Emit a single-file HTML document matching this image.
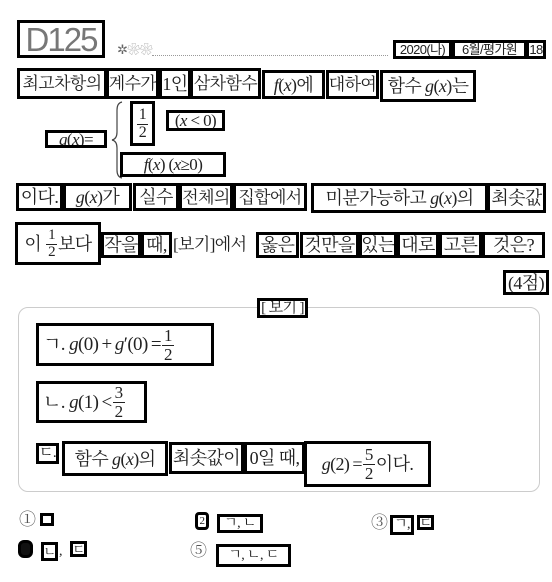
<!DOCTYPE html>
<html><head><meta charset="utf-8"><style>
body{margin:0;width:552px;height:582px;background:#fff;position:relative;overflow:hidden;font-family:"Liberation Serif","Noto Serif CJK KR","Noto Serif CJK SC",serif;color:#222}
.b{position:absolute;border:3px solid #000;box-sizing:border-box;display:flex;align-items:center;justify-content:center;white-space:nowrap;font-size:18px;letter-spacing:-0.6px;line-height:1;overflow:hidden}
.t{position:absolute;white-space:nowrap;font-size:18px;letter-spacing:-0.6px;line-height:1}
i{font-style:italic}
.fr{display:inline-flex;flex-direction:column;align-items:center;font-size:15px;line-height:1;vertical-align:middle;margin:0 1px}
.fr span:first-child{border-bottom:1px solid #222;padding:0 2px 1px}
.s{font-family:"Liberation Sans","Noto Sans CJK KR",sans-serif}
</style></head><body>
<div class="b s" style="left:17px;top:20px;width:88px;height:38px;font-size:33px;color:#777;letter-spacing:-2px">D125</div>
<div class="t" style="left:117px;top:43px;font-size:13px;color:#666">✲<span style="color:#bbb">❀❀</span></div>
<div style="position:absolute;left:152px;top:55px;width:236px;border-top:1px dotted #999"></div>
<div class="b s" style="left:393px;top:40px;width:59px;height:19px;font-size:13px">2020(나)</div>
<div class="b s" style="left:452px;top:40px;width:75px;height:19px;font-size:13px">6월/평가원</div>
<div class="b s" style="left:526px;top:40px;width:20px;height:19px;font-size:13px">18</div>

<div class="b" style="left:17px;top:68px;width:90px;height:31px;font-size:17px">최고차항의</div>
<div class="b" style="left:106px;top:68px;width:53px;height:31px;font-size:17px">계수가</div>
<div class="b" style="left:159px;top:68px;width:32px;height:31px">1인</div>
<div class="b" style="left:190px;top:68px;width:71px;height:31px;font-size:17px">삼차함수</div>
<div class="b" style="left:262px;top:70px;width:63px;height:29px"><i>f</i>(<i>x</i>)에</div>
<div class="b" style="left:326px;top:70px;width:53px;height:29px;font-size:17px">대하여</div>
<div class="b" style="left:380px;top:70px;width:96px;height:32px">함수&nbsp;<i>g</i>(<i>x</i>)는</div>

<div class="b" style="left:45px;top:130px;width:62px;height:18px;font-size:17px"><i>g</i>(<i>x</i>)=</div>
<svg style="position:absolute;left:110px;top:100px" width="16" height="80"><path d="M12 2 Q7 3 7 10 L7 32 Q7 39 2 40 Q7 41 7 48 L7 70 Q7 77 12 78" fill="none" stroke="#444" stroke-width="1.2"/></svg>
<div class="b" style="left:130px;top:101px;width:25px;height:45px"><span class="fr" style="font-size:16px"><span>1</span><span>2</span></span></div>
<div class="b" style="left:166px;top:110px;width:59px;height:21px;font-size:17px">(<i>x</i>&nbsp;&lt;&nbsp;0)</div>
<div class="b" style="left:120px;top:152px;width:106px;height:25px;font-size:17px"><i>f</i>(<i>x</i>)&nbsp;(<i>x</i>≥0)</div>

<div class="b" style="left:16px;top:183px;width:47px;height:28px">이다.</div>
<div class="b" style="left:63px;top:183px;width:69px;height:28px"><i>g</i>(<i>x</i>)가</div>
<div class="b" style="left:133px;top:183px;width:46px;height:28px">실수</div>
<div class="b" style="left:179px;top:183px;width:54px;height:28px;font-size:17px">전체의</div>
<div class="b" style="left:233px;top:183px;width:74px;height:28px;font-size:17px">집합에서</div>
<div class="b" style="left:311px;top:183px;width:177px;height:30px">미분가능하고&nbsp;<i>g</i>(<i>x</i>)의</div>
<div class="b" style="left:487px;top:183px;width:59px;height:30px">최솟값</div>

<div class="b" style="left:15px;top:222px;width:86px;height:43px">이&nbsp;<span class="fr"><span>1</span><span>2</span></span>보다</div>
<div class="b" style="left:101px;top:232px;width:40px;height:26px">작을</div>
<div class="b" style="left:141px;top:232px;width:31px;height:26px">때,</div>
<div class="t" style="left:173px;top:236px;font-size:17px">[보기]에서</div>
<div class="b" style="left:256px;top:232px;width:43px;height:26px">옳은</div>
<div class="b" style="left:300px;top:232px;width:59px;height:26px">것만을</div>
<div class="b" style="left:359px;top:232px;width:38px;height:26px">있는</div>
<div class="b" style="left:397px;top:232px;width:42px;height:26px">대로</div>
<div class="b" style="left:439px;top:232px;width:43px;height:26px">고른</div>
<div class="b" style="left:482px;top:232px;width:63px;height:26px">것은?</div>
<div class="b" style="left:503px;top:270px;width:46px;height:25px">(4점)</div>

<div style="position:absolute;left:18px;top:307px;width:522px;height:185px;border:1px solid #ccc;border-radius:10px;box-sizing:border-box"></div>
<div class="b" style="left:257px;top:298px;width:51px;height:20px;font-size:15px;background:#fff">[ 보기 ]</div>
<div class="b" style="left:36px;top:323px;width:178px;height:43px;justify-content:flex-start;padding-left:4px;font-size:19px">ㄱ.&nbsp;<i>g</i>(0)&thinsp;+&thinsp;<i>g</i>′(0)&thinsp;=<span class="fr" style="font-size:17px"><span>1</span><span>2</span></span></div>
<div class="b" style="left:36px;top:381px;width:111px;height:42px;justify-content:flex-start;padding-left:4px;font-size:19px">ㄴ.&nbsp;<i>g</i>(1)&thinsp;&lt;<span class="fr" style="font-size:17px"><span>3</span><span>2</span></span></div>
<div class="b" style="left:36px;top:443px;width:23px;height:21px;font-size:15px">ㄷ.</div>
<div class="b" style="left:62px;top:441px;width:106px;height:35px">함수&nbsp;<i>g</i>(<i>x</i>)의</div>
<div class="b" style="left:169px;top:442px;width:75px;height:32px">최솟값이</div>
<div class="b" style="left:244px;top:442px;width:61px;height:32px">0일&nbsp;때,</div>
<div class="b" style="left:304px;top:441px;width:127px;height:46px"><i>g</i>(2)&thinsp;=<span class="fr" style="font-size:17px"><span>5</span><span>2</span></span>이다.</div>

<div class="t" style="left:19px;top:511px;font-size:17px;color:#555">①</div>
<div class="b" style="left:40px;top:513px;width:14px;height:13px"></div>
<div class="b" style="left:195px;top:512px;width:14px;height:18px;border-radius:4px;font-size:11px">2</div>
<div class="b" style="left:217px;top:514px;width:46px;height:19px;font-size:14px">ㄱ,&nbsp;ㄴ</div>
<div class="t" style="left:371px;top:514px;font-size:17px;color:#555">③</div>
<div class="b" style="left:390px;top:515px;width:24px;height:20px;font-size:14px">ㄱ,</div>
<div class="b" style="left:417px;top:515px;width:17px;height:15px;font-size:13px">ㄷ</div>
<div class="b" style="left:18px;top:540px;width:15px;height:18px;border-radius:6px;background:#111"></div>
<div class="b" style="left:41px;top:542px;width:17px;height:19px;font-size:13px">ㄴ</div>
<div class="t" style="left:59px;top:545px;font-size:14px">,</div>
<div class="b" style="left:70px;top:541px;width:17px;height:16px;font-size:13px">ㄷ</div>
<div class="t" style="left:190px;top:542px;font-size:17px;color:#555">⑤</div>
<div class="b" style="left:216px;top:544px;width:75px;height:23px;font-size:14px">ㄱ,&nbsp;ㄴ,&nbsp;ㄷ</div>
</body></html>
